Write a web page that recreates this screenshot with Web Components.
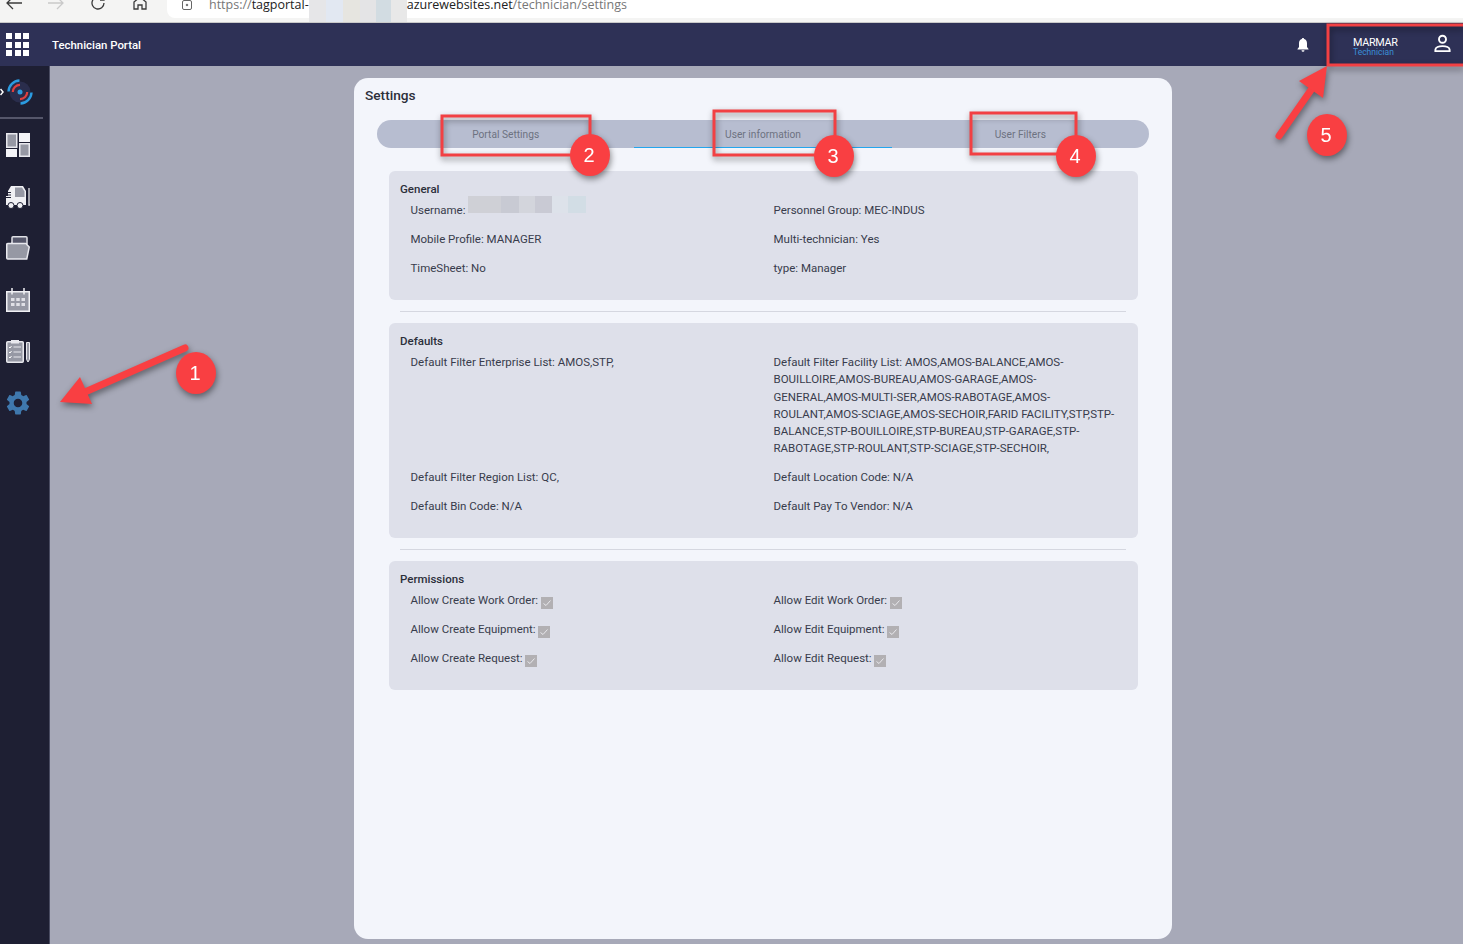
<!DOCTYPE html>
<html lang="en">
<head>
<meta charset="utf-8">
<title>Technician Portal - Settings</title>
<style>
    html, body {
        margin: 0;
        height: 100%;
        overflow: hidden;
        font-family: Roboto, "Liberation Sans", sans-serif;
    }

    tp-app {
        height: 944px;
    }
</style>
</head>
<body>
<tp-app>
    <tp-browser-bar slot="browser"></tp-browser-bar>
    <tp-header slot="header"></tp-header>
    <tp-sidebar slot="sidebar"></tp-sidebar>

    <tp-card heading="Settings">
        <tp-tabs></tp-tabs>

        <tp-section heading="General">
            <tp-field>Username: <tp-redacted></tp-redacted></tp-field>
            <tp-field>Personnel Group: MEC-INDUS</tp-field>
            <tp-field>Mobile Profile: MANAGER</tp-field>
            <tp-field>Multi-technician: Yes</tp-field>
            <tp-field>TimeSheet: No</tp-field>
            <tp-field>type: Manager</tp-field>
        </tp-section>
        <tp-rule></tp-rule>

        <tp-section heading="Defaults">
            <tp-field>Default Filter Enterprise List: AMOS,STP,</tp-field>
            <tp-field>Default Filter Facility List: AMOS,AMOS-BALANCE,AMOS-<br>BOUILLOIRE,AMOS-BUREAU,AMOS-GARAGE,AMOS-<br>GENERAL,AMOS-MULTI-SER,AMOS-RABOTAGE,AMOS-<br>ROULANT,AMOS-SCIAGE,AMOS-SECHOIR,FARID FACILITY,STP,STP-<br>BALANCE,STP-BOUILLOIRE,STP-BUREAU,STP-GARAGE,STP-<br>RABOTAGE,STP-ROULANT,STP-SCIAGE,STP-SECHOIR,</tp-field>
            <tp-field>Default Filter Region List: QC,</tp-field>
            <tp-field>Default Location Code: N/A</tp-field>
            <tp-field>Default Bin Code: N/A</tp-field>
            <tp-field>Default Pay To Vendor: N/A</tp-field>
        </tp-section>
        <tp-rule></tp-rule>

        <tp-section heading="Permissions">
            <tp-field>Allow Create Work Order: <tp-check></tp-check></tp-field>
            <tp-field>Allow Edit Work Order: <tp-check></tp-check></tp-field>
            <tp-field>Allow Create Equipment: <tp-check></tp-check></tp-field>
            <tp-field>Allow Edit Equipment: <tp-check></tp-check></tp-field>
            <tp-field>Allow Create Request: <tp-check></tp-check></tp-field>
            <tp-field>Allow Edit Request: <tp-check></tp-check></tp-field>
        </tp-section>
    </tp-card>

    <tp-annotations slot="overlay"></tp-annotations>
</tp-app>

<script>
// (PARENT) page frame: browser strip, app header, sidebar and main area
class TpApp extends HTMLElement {
    constructor() {
        super();
        this.attachShadow({ mode: 'open' });
        this.shadowRoot.innerHTML = `
        <style>
            :host {
                display: grid;
                position: relative;
                grid-template-columns: 50px 1fr;
                grid-template-rows: 23px 43px 1fr;
                background: #a7a9b8;
                overflow: hidden;
            }

            .wide {
                display: block;
                grid-column: 1 / 3;
            }

            main {
                padding: 12px 0 5px 304px;
                min-height: 0;
            }
        </style>

        <div class="wide"><slot name="browser"></slot></div>
        <div class="wide"><slot name="header"></slot></div>
        <slot name="sidebar"></slot>
        <main><slot></slot></main>
        <slot name="overlay"></slot>
        `;
    }
}

// the cut-off browser toolbar at the top of the capture
class TpBrowserBar extends HTMLElement {
    constructor() {
        super();
        this.attachShadow({ mode: 'open' });
        this.shadowRoot.innerHTML = `
        <style>
            :host {
                display: block;
                height: 23px;
                box-sizing: border-box;
                background: #f4f4f3;
                border-bottom: 1px solid #c9c9c9;
                overflow: hidden;
                font: 12.500px "Open Sans", "Liberation Sans", sans-serif;
            }

            .row {
                display: flex;
                height: 30px;
                margin-top: -12px;
                align-items: center;
            }

            svg {
                flex: none;
                fill: none;
                stroke: #3b3b3b;
                stroke-width: 1.300;
            }

            .nav {
                flex: none;
                width: 42px;
                display: flex;
                justify-content: center;
            }

            .nav:first-child {
                width: 35px;
                justify-content: flex-start;
                padding-left: 5px;
                box-sizing: border-box;
            }

            .pill {
                flex: 1;
                display: flex;
                align-items: center;
                align-self: stretch;
                margin-left: 6px;
                padding-left: 14px;
                background: #fff;
                border-radius: 8px 0 0 8px;
            }

            .pill svg {
                margin: 4px 16px 0 0;
            }

            .text {
                margin-top: 4px;
                line-height: 10px;
                white-space: nowrap;
                color: #777;
            }

            .dark {
                color: #222;
            }

            .blur {
                flex: none;
                align-self: flex-start;
                width: 98px;
                height: 34px;
                background: linear-gradient(90deg, #e6e6e8 0 17%, #e2e8f2 17% 35%, #e6e5e0 35% 52%, #e4e4e6 52% 68%, #d2dce2 68% 84%, #e8e8e8 84%);
            }
        </style>

        <div class="row">
            <span class="nav"><svg width="18" height="14" viewBox="0 0 18 14"><path d="M17 7H2M8 1L2 7l6 6"/></svg></span>
            <span class="nav"><svg width="18" height="14" viewBox="0 0 18 14" style="stroke:#c9c9c9"><path d="M1 7h15M10 1l6 6-6 6"/></svg></span>
            <span class="nav"><svg width="16" height="16" viewBox="0 0 16 16"><path d="M14 8a6 6 0 1 1-2-4.500L14 5M14 1v4h-4"/></svg></span>
            <span class="nav"><svg width="16" height="16" viewBox="0 0 16 16"><path d="M2 7l6-5 6 5v7h-4v-4H6v4H2z"/></svg></span>
            <div class="pill">
                <svg width="12" height="12" viewBox="0 0 12 12" style="stroke:#666;stroke-width:1"><rect x="1.500" y="1.500" width="9" height="9" rx="1.500"/><circle cx="6" cy="6" r=".8" fill="#666"/></svg>
                <span class="text">https://<span class="dark">tagportal-</span></span>
                <span class="blur"></span>
                <span class="text"><span class="dark">azurewebsites.net</span>/technician/settings</span>
            </div>
        </div>
        `;
    }
}

// navy header with the app launcher, title, bell and user block
class TpHeader extends HTMLElement {
    constructor() {
        super();
        this.attachShadow({ mode: 'open' });
        this.shadowRoot.innerHTML = `
        <style>
            :host {
                display: flex;
                align-items: center;
                height: 43px;
                background: #2e3156;
                color: #fff;
                font-family: Roboto, "Liberation Sans", sans-serif;
            }

            .launcher {
                display: grid;
                grid-template-columns: repeat(3, 6px);
                grid-auto-rows: 6px;
                gap: 2.500px;
                margin: 0 23px 0 6px;
            }

            .launcher i {
                background: #fff;
            }

            .title {
                font-size: 11.400px;
                font-weight: 500;
                flex: 1;
            }

            .bell {
                display: flex;
                margin-right: 18px;
            }

            .user {
                width: 135px;
                display: flex;
                align-items: center;
                padding-left: 25px;
                box-sizing: border-box;
            }

            .who {
                flex: 1;
                padding-top: 4px;
                font-size: 10.800px;
                line-height: 11px;
                letter-spacing: -0.3px;
            }

            .who small {
                display: block;
                font-size: 8.500px;
                line-height: 9px;
                letter-spacing: 0;
                color: #3a8fd6;
            }

            .person {
                display: flex;
                margin: 0 11px 2px 0;
            }
        </style>

        <div class="launcher"><i></i><i></i><i></i><i></i><i></i><i></i><i></i><i></i><i></i></div>
        <div class="title">Technician Portal</div>
        <span class="bell"><svg width="14" height="15" viewBox="0 0 14 15" fill="#fff"><path d="M7 1c.7 0 1.100.5 1.100 1.100C10 2.600 11 4.200 11 6.200V10l1.500 2v.6h-11V12L3 10V6.200C3 4.200 4 2.600 5.900 2.100 5.900 1.500 6.300 1 7 1z"/><path d="M5.500 13.300h3a1.500 1.500 0 0 1-3 0z"/></svg></span>
        <div class="user">
            <div class="who">MARMAR<small>Technician</small></div>
            <span class="person"><svg width="19" height="19" viewBox="0 0 20 20" fill="none" stroke="#fff" stroke-width="2"><circle cx="10" cy="5.500" r="3.700"/><path d="M2.500 18v-1.500c0-2.200 3.500-3.700 7.500-3.700s7.500 1.500 7.500 3.700V18z"/></svg></span>
        </div>
        `;
    }
}

// dark left rail with the logo and the module icons
class TpSidebar extends HTMLElement {
    constructor() {
        super();
        this.attachShadow({ mode: 'open' });
        this.shadowRoot.innerHTML = `
        <style>
            :host {
                display: flex;
                flex-direction: column;
                background: #1e1f33;
                border-right: 1px solid #4a4c62;
                box-sizing: border-box;
            }

            .logo {
                height: 53px;
                margin-right: 6px;
                border-bottom: 2px solid #55566a;
                display: flex;
                align-items: center;
                box-sizing: border-box;
            }

            svg {
                display: block;
                flex: none;
            }

            .icons {
                display: flex;
                flex-direction: column;
                gap: 27.600px;
                padding: 14px 0 0 6px;
            }
        </style>

        <div class="logo">
            <svg width="36" height="26" viewBox="0 0 36 26" fill="none">
                <path d="M0.500 10l2.500 3-2.500 3" stroke="#fff" stroke-width="1.500"/>
                <circle cx="20" cy="13" r="10.500" fill="#2a2d4c"/>
                <path d="M8.500 12.500A11.500 11.500 0 0 1 19.500 1.500" stroke="#2b9be0" stroke-width="2.400"/>
                <path d="M31.500 13.500A11.500 11.500 0 0 1 20.500 24.500" stroke="#2b9be0" stroke-width="2.400"/>
                <path d="M12.800 13A7.200 7.200 0 0 1 20 5.800" stroke="#e0403f" stroke-width="2.200"/>
                <path d="M27.200 13A7.200 7.200 0 0 1 20 20.200" stroke="#e0403f" stroke-width="2.200"/>
                <circle cx="20" cy="13" r="2.500" fill="#2b9be0"/>
            </svg>
        </div>
        <div class="icons">
            <svg width="24" height="24" viewBox="0 0 24 24">
                <rect x=".75" y=".75" width="10" height="13.500" fill="#9698a4" stroke="#e8e8ee" stroke-width="1.500"/>
                <rect x="13" width="11" height="9" fill="#f4f4f8"/>
                <rect y="16" width="11" height="8" fill="#f4f4f8"/>
                <rect x="13.750" y="10.750" width="9.500" height="12.500" fill="#9698a4" stroke="#e8e8ee" stroke-width="1.500"/>
            </svg>
            <svg width="24" height="24" viewBox="0 0 24 24">
                <path d="M5 1h12l3 5v14H0v-9h2V6z" fill="#f0f0f4"/>
                <path d="M9 2.500h7l2.500 4V12H9z" fill="#9698a4"/>
                <path d="M0 7.500h5M0 10h5M0 12.500h5" stroke="#1e1f33"/>
                <path d="M23 3v17h1.500" fill="none" stroke="#c9c9d0" stroke-width="1.500"/>
                <circle cx="5" cy="20.500" r="3" fill="#f0f0f4" stroke="#1e1f33"/>
                <circle cx="14" cy="20.500" r="3" fill="#f0f0f4" stroke="#1e1f33"/>
            </svg>
            <svg width="24" height="24" viewBox="0 0 24 24">
                <rect x="6" y=".75" width="15" height="8" rx="1" fill="#55566a" stroke="#e0e0e6" stroke-width="1.500"/>
                <path d="M.75 8h5V6.500" fill="none" stroke="#e0e0e6" stroke-width="1.500"/>
                <path d="M.75 8.500a1 1 0 0 1 1-1h18a1 1 0 0 1 1 1l2.500 2.500-2.500 12H1.750a1 1 0 0 1-1-1z" fill="#9698a4" stroke="#e8e8ee" stroke-width="1.500"/>
            </svg>
            <svg width="24" height="24" viewBox="0 0 24 24">
                <path d="M.75 3.750h22.500v19.500H.75z" fill="#9698a4" stroke="#f0f0f4" stroke-width="1.500"/>
                <path d="M6 0v6.500M18 0v6.500" stroke="#f0f0f4" stroke-width="1.500"/>
                <g fill="#e0e0e6"><rect x="5" y="10" width="3.500" height="3"/><rect x="10.250" y="10" width="3.500" height="3"/><rect x="15.500" y="10" width="3.500" height="3"/><rect x="5" y="15" width="3.500" height="3"/><rect x="10.250" y="15" width="3.500" height="3"/><rect x="15.500" y="15" width="3.500" height="3"/></g>
            </svg>
            <svg width="24" height="24" viewBox="0 0 24 24">
                <rect x=".75" y="2.750" width="16.500" height="20.500" rx="1" fill="#9698a4" stroke="#e8e8ee" stroke-width="1.500"/>
                <rect x="5" y="1" width="8" height="3.500" fill="#e8e8ee"/>
                <path d="M3 8l1 1 1.500-2M3 13l1 1 1.500-2M3 18l1 1 1.500-2" fill="none" stroke="#fff"/>
                <path d="M7.500 8h7.500M7.500 13h7.500M7.500 18h7.500" stroke="#e8e8ee"/>
                <path d="M20.500 3.500h3v17l-1.500 2.500-1.500-2.500z" fill="#9698a4" stroke="#e8e8ee"/>
            </svg>
            <svg width="24" height="24" viewBox="2.300 1.900 19.400 20.200">
                <path fill="#3f78ad" d="M19.140 12.940c.04-.3.06-.61.06-.94 0-.32-.02-.64-.07-.94l2.030-1.580a.49.49 0 0 0 .12-.61l-1.920-3.320a.488.488 0 0 0-.59-.22l-2.390.96c-.5-.38-1.030-.7-1.620-.94l-.36-2.540a.484.484 0 0 0-.48-.41h-3.840c-.24 0-.43.17-.47.41l-.36 2.540c-.59.24-1.130.57-1.620.94l-2.390-.96c-.22-.08-.47 0-.59.22L2.740 8.870c-.12.21-.08.47.12.61l2.030 1.580c-.05.3-.09.63-.09.94s.02.64.07.94l-2.030 1.580a.49.49 0 0 0-.12.61l1.920 3.320c.12.22.37.29.59.22l2.390-.96c.5.38 1.030.7 1.620.94l.36 2.540c.05.24.24.41.48.41h3.840c.24 0 .44-.17.47-.41l.36-2.540c.59-.24 1.130-.56 1.620-.94l2.390.96c.22.08.47 0 .59-.22l1.920-3.320c.12-.22.07-.47-.12-.61l-2.010-1.580zM12 15.600c-1.980 0-3.600-1.620-3.600-3.600s1.620-3.600 3.600-3.600 3.600 1.620 3.600 3.600-1.620 3.600-3.600 3.600z"/>
            </svg>
        </div>
        `;
    }
}

// the big rounded panel holding the settings content
class TpCard extends HTMLElement {
    constructor() {
        super();
        this.attachShadow({ mode: 'open' });
        this.shadowRoot.innerHTML = `
        <style>
            :host {
                display: block;
                width: 818px;
                height: 861px;
                box-sizing: border-box;
                padding: 9px 0 0;
                background: #f3f5fb;
                border-radius: 14px;
                font-family: Roboto, "Liberation Sans", sans-serif;
            }

            h1 {
                margin: 0 0 16px 11px;
                font-size: 13.700px;
                line-height: 17px;
                font-weight: 500;
                color: #2c2f3a;
            }
        </style>

        <h1></h1>
        <slot></slot>
        `;
        this.shadowRoot.querySelector('h1').textContent = this.getAttribute('heading');
    }
}

// pill shaped tab strip, the middle tab is the active one
class TpTabs extends HTMLElement {
    constructor() {
        super();
        this.attachShadow({ mode: 'open' });
        this.shadowRoot.innerHTML = `
        <style>
            :host {
                display: grid;
                grid-template-columns: repeat(3, 1fr);
                height: 28px;
                margin: 0 23px 23px;
                background: #b7bdd0;
                border-radius: 14px;
                font-size: 10.200px;
                color: #6d7280;
            }

            div {
                display: flex;
                align-items: center;
                justify-content: center;
                box-sizing: border-box;
            }

            .active {
                border-bottom: 1px solid #23a6ee;
                padding-top: 1px;
            }
        </style>

        <div>Portal Settings</div>
        <div class="active">User information</div>
        <div>User Filters</div>
        `;
    }
}

// one grey block: a heading and a two-column list of fields
class TpSection extends HTMLElement {
    constructor() {
        super();
        this.attachShadow({ mode: 'open' });
        this.shadowRoot.innerHTML = `
        <style>
            :host {
                display: block;
                margin: 0 34px 0 35px;
                padding: 11px 11px 22.700px;
                background: #dee0ea;
                border-radius: 6px;
            }

            h2 {
                margin: 0 0 6px;
                font-size: 11.500px;
                line-height: 14px;
                font-weight: 500;
                color: #2c2f3a;
            }

            .fields {
                display: grid;
                grid-template-columns: 363px 1fr;
                row-gap: 11.700px;
                padding-left: 10.500px;
            }
        </style>

        <h2></h2>
        <div class="fields"><slot></slot></div>
        `;
        this.shadowRoot.querySelector('h2').textContent = this.getAttribute('heading');
    }
}

// a single label/value line
class TpField extends HTMLElement {
    constructor() {
        super();
        this.attachShadow({ mode: 'open' });
        this.shadowRoot.innerHTML = `
        <style>
            :host {
                display: block;
                height: fit-content;
                font-size: 11.500px;
                line-height: 17.300px;
                color: #383c4c;
                white-space: nowrap;
            }
        </style>
        <slot></slot>
        `;
    }
}

// thin divider between the sections
class TpRule extends HTMLElement {
    constructor() {
        super();
        this.attachShadow({ mode: 'open' });
        this.shadowRoot.innerHTML = `
        <style>
            :host {
                display: block;
                height: 1px;
                margin: 11px 46px 11px 46px;
                background: #d5d7e0;
            }
        </style>
        `;
    }
}

// disabled, checked checkbox
class TpCheck extends HTMLElement {
    constructor() {
        super();
        this.attachShadow({ mode: 'open' });
        this.shadowRoot.innerHTML = `
        <style>
            :host {
                display: inline-block;
                width: 12px;
                height: 12px;
                margin: -2px 0;
                vertical-align: -3px;
                background: #b2b0b3;
            }

            svg {
                display: block;
            }
        </style>
        <svg width="12" height="12" viewBox="0 0 12 12" fill="none" stroke="#e8e8ec" stroke-width="1"><path d="M2.500 6.500l2.500 2 4.500-5"/></svg>
        `;
    }
}

// the smudged out username
class TpRedacted extends HTMLElement {
    constructor() {
        super();
        this.attachShadow({ mode: 'open' });
        this.shadowRoot.innerHTML = `
        <style>
            :host {
                display: inline-block;
                width: 118px;
                height: 17px;
                margin-top: -6px;
                vertical-align: top;
                background: linear-gradient(90deg, #cfd0d6 0 28%, #c8cad3 28% 43%, #d3d5dc 43% 57%, #c9cad4 57% 71%, #dde2ea 71% 85%, #d2dde5 85%);
            }
        </style>
        `;
    }
}

// the red callouts drawn on top of the screenshot
class TpAnnotations extends HTMLElement {
    constructor() {
        super();
        this.attachShadow({ mode: 'open' });

        const boxes = [
            [442, 116, 148, 39],
            [714, 111, 121, 44],
            [971, 113, 105, 41],
            [1328, 25, 140, 40],
        ];
        const badges = [
            [196, 373, '1'],
            [590, 155, '2'],
            [834, 156, '3'],
            [1076, 156, '4'],
            [1327, 135, '5'],
        ];

        const boxMarkup = boxes.map(([x, y, w, h]) =>
            `<rect x="${x}" y="${y}" width="${w}" height="${h}" fill="none" stroke="#f24043" stroke-width="3"/>`).join('');
        const badgeMarkup = badges.map(([x, y, label]) =>
            `<ellipse cx="${x}" cy="${y}" rx="20" ry="21" fill="#f93f42"/>
             <text x="${x - 1}" y="${y + 7}" text-anchor="middle">${label}</text>`).join('');

        this.shadowRoot.innerHTML = `
        <style>
            :host {
                display: block;
                position: absolute;
                inset: 0;
                pointer-events: none;
            }

            svg {
                display: block;
                filter: drop-shadow(1px 3px 3px rgba(0, 0, 0, 0.45));
            }

            text {
                font: 20px "Liberation Sans", Roboto, sans-serif;
                fill: #fff;
            }
        </style>

        <svg width="1463" height="944" viewBox="0 0 1463 944">
            ${boxMarkup}
            <path d="M185 348L85 392" stroke="#f93f42" stroke-width="7" stroke-linecap="round"/>
            <path d="M60 402L80 377L92 404z" fill="#f93f42"/>
            <path d="M1279 136L1311 90" stroke="#f93f42" stroke-width="7" stroke-linecap="round"/>
            <path d="M1327 66L1299 81L1323 98z" fill="#f93f42"/>
            ${badgeMarkup}
        </svg>
        `;
    }
}

// set the element names for our components
customElements.define('tp-app', TpApp);
customElements.define('tp-browser-bar', TpBrowserBar);
customElements.define('tp-header', TpHeader);
customElements.define('tp-sidebar', TpSidebar);
customElements.define('tp-card', TpCard);
customElements.define('tp-tabs', TpTabs);
customElements.define('tp-section', TpSection);
customElements.define('tp-field', TpField);
customElements.define('tp-rule', TpRule);
customElements.define('tp-check', TpCheck);
customElements.define('tp-redacted', TpRedacted);
customElements.define('tp-annotations', TpAnnotations);
</script>
</body>
</html>
